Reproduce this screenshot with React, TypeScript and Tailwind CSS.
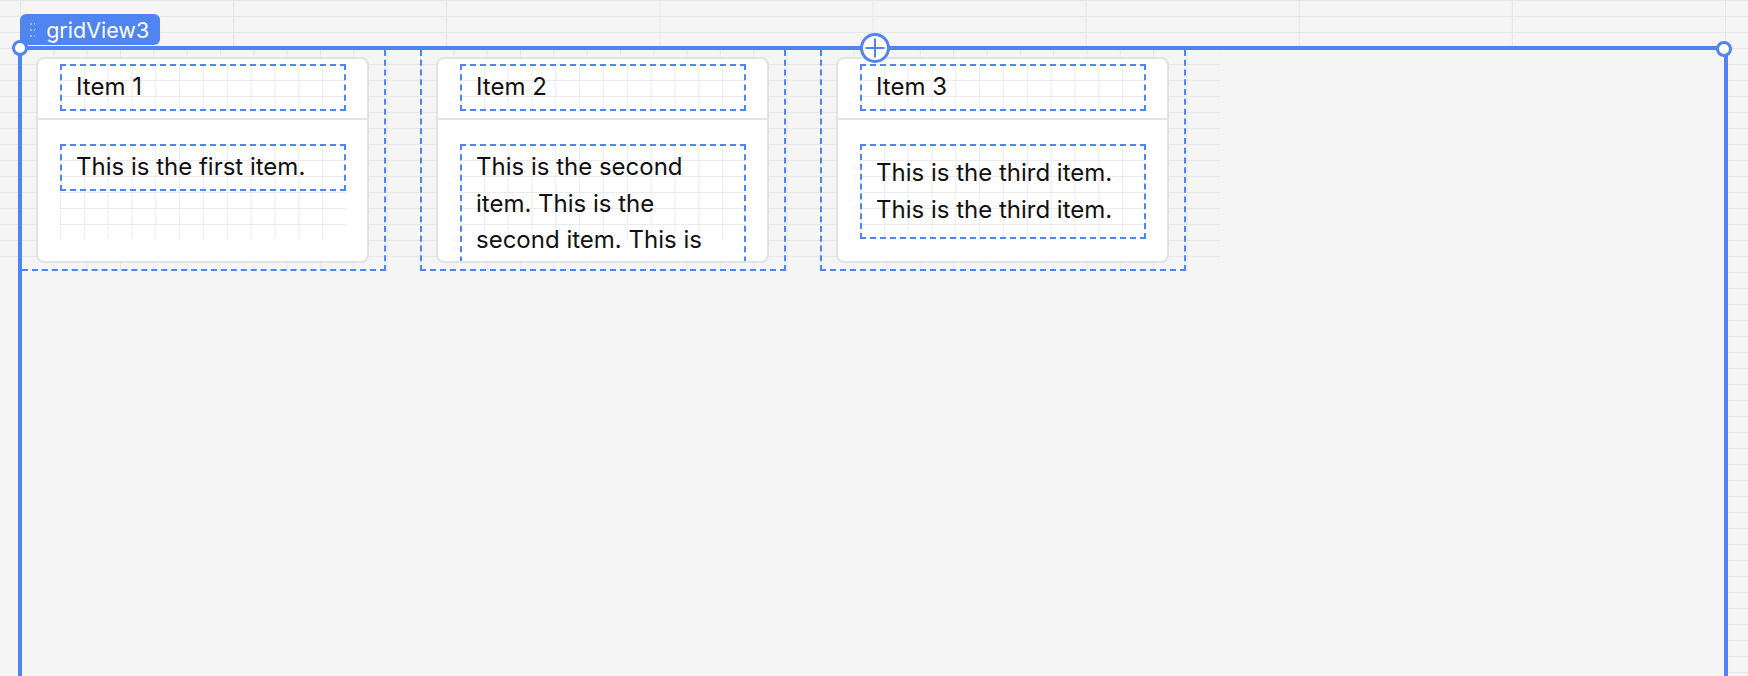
import React from 'react';

const blue = 'border-[#5084f0]';

type Item = {
  title: string;
  body: string;
  boxClass: string;
};

const items: Item[] = [
  { title: 'Item 1', body: 'This is the first item.', boxClass: 'h-[47px] flex items-center' },
  {
    title: 'Item 2',
    body: 'This is the second item. This is the second item. This is the second item. This is the second item.',
    boxClass: 'pt-[3px]',
  },
  {
    title: 'Item 3',
    body: 'This is the third item. This is the third item.',
    boxClass: 'h-[95px] flex items-center',
  },
];

const cardGrid =
  'bg-origin-border bg-[linear-gradient(to_right,#ebebeb_1px,transparent_1px),linear-gradient(to_bottom,#ebebeb_1px,transparent_1px)] bg-size-[23.833px_16px]';

const GridItem: React.FC<{ item: Item; first: boolean }> = ({ item, first }) => (
  <div
    className={`h-full shrink-0 border-b-2 border-r-2 border-dashed ${blue} pl-[14px] pt-[7px] ${
      first ? 'w-[364px]' : 'w-[366px] border-l-2'
    }`}
  >
    <div className="h-[206px] w-[333px] overflow-hidden rounded-[8px] border-2 border-[#e3e3e3] bg-white">
      {/* header */}
      <div className="pl-[22px] pr-[21px] pt-[5px]">
        <div className={`flex h-[47px] items-center border-2 border-dashed ${blue} pl-[14px] ${cardGrid}`}>
          <span className="text-[24px] leading-[36.67px]">{item.title}</span>
        </div>
      </div>
      <div className="mt-[7px] h-[2px] bg-[#e3e3e3]" />
      {/* body */}
      <div className="pl-[22px] pr-[21px] pt-[24px]">
        <div className={`h-[95px] ${cardGrid}`}>
          <div className={`border-2 border-dashed ${blue} bg-transparent pl-[14px] pr-[14px] ${item.boxClass}`}>
            <p className="text-[24px] leading-[36.67px]">{item.body}</p>
          </div>
        </div>
      </div>
    </div>
  </div>
);

export default function App() {
  return (
    <div
      className="relative h-[676px] w-[1748px] overflow-hidden bg-[#f5f5f5] bg-[linear-gradient(to_bottom,#e6e6e6_1px,transparent_1px),linear-gradient(to_right,#e6e6e6_1px,transparent_1px)] bg-size-[213.125px_16px] bg-position-[20px_0px] text-[#111]"
      style={{ fontFamily: 'Inter, "Noto Sans", sans-serif' }}
    >
      <div className="flex h-full pt-[46px]">
        {/* left strip */}
        <div className="flex w-[18px] shrink-0 flex-col">
          <div className="h-[214px]" />
          <div className="flex-1 bg-[#f5f5f5]" />
        </div>

        {/* gridView3 container */}
        <div className={`relative w-[1710px] shrink-0 border-x-4 border-t-4 ${blue} bg-[#f5f5f5]`}>
          <div className="flex h-[221px] w-[1198px] gap-[34px] bg-[linear-gradient(to_right,#e6e6e6_1px,transparent_1px),linear-gradient(to_bottom,#e6e6e6_1px,transparent_1px)] bg-size-[33.333px_16px] bg-position-[-2px_14px]">
            {items.map((item, i) => (
              <GridItem key={item.title} item={item} first={i === 0} />
            ))}
          </div>

          {/* name tag */}
          <div className="absolute -left-[2px] top-[-36px] flex h-[31px] items-start gap-[11px] rounded-[6px] bg-[#5084f0] pl-[10px] pr-[11px] pt-[2px] text-white">
            <div className="mt-[7px] grid grid-cols-2 gap-x-[2px] gap-y-[4.5px]">
              {[0, 1, 2, 3, 4, 5].map((i) => (
                <span key={i} className="h-[1.6px] w-[1.6px] rounded-full bg-white/60" />
              ))}
            </div>
            <span className="text-[21.5px] leading-[29px]">gridView3</span>
          </div>

          {/* corner handles */}
          <div className={`absolute -left-[10.5px] -top-[10px] h-[16px] w-[16px] rounded-full border-[3px] ${blue} bg-white`} />
          <div className={`absolute -right-[8px] -top-[9px] h-[16px] w-[16px] rounded-full border-[3px] ${blue} bg-white`} />

          {/* add button */}
          <div className={`absolute left-[838px] top-[-17px] flex h-[30px] w-[30px] items-center justify-center rounded-full border-[3px] ${blue} bg-white`}>
            <svg width="20" height="20" viewBox="0 0 20 20" fill="none" stroke="#5084f0" strokeWidth="2">
              <path d="M10 0.5v19M0.5 10h19" />
            </svg>
          </div>
        </div>

        {/* right strip shows page grid */}
        <div className="flex-1" />
      </div>
    </div>
  );
}
